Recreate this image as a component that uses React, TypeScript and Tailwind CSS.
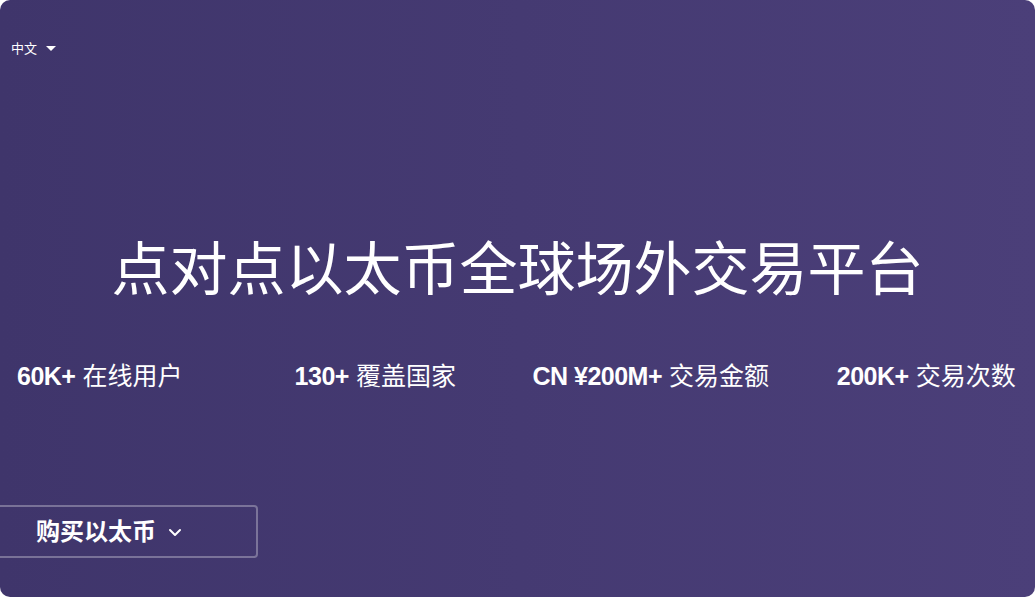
import React from "react";

const font = { fontFamily: '"Liberation Sans", "Noto Sans CJK SC", sans-serif' };

function Stat({ num, label }: { num: string; label: string }) {
  return (
    <div className="flex justify-center items-baseline whitespace-nowrap text-white text-[25px] leading-none">
      <span className="font-bold tracking-[-0.5px]">{num}</span>
      <span className="ml-[7px] font-normal">{label}</span>
    </div>
  );
}

export default function App() {
  return (
    <div className="w-[1035px] h-[597px] bg-white overflow-hidden" style={font}>
      <div className="relative w-full h-full rounded-[10px] overflow-hidden bg-gradient-to-r from-[#3f356b] to-[#4b3f79] flex flex-col">
        <div className="pt-[42px] pl-[11px] flex items-center text-white text-[13px] leading-none">
          <span>中文</span>
          <svg className="ml-[9px]" width="10" height="5" viewBox="0 0 10 5">
            <path d="M0 0 L10 0 L5 5 Z" fill="white" />
          </svg>
        </div>
        <h1 className="mt-[186px] text-center text-white text-[58px] leading-none font-normal tracking-[0px]">
          点对点以太币全球场外交易平台
        </h1>
        <div className="mt-[65px] -ml-[38px] w-[1102px] grid grid-cols-4">
          <Stat num="60K+" label="在线用户" />
          <Stat num="130+" label="覆盖国家" />
          <Stat num="CN ¥200M+" label="交易金额" />
          <Stat num="200K+" label="交易次数" />
        </div>
        <div className="mt-[116px] -ml-[12px] w-[270px] h-[53px] border-2 border-white/30 rounded-[4px] flex items-center pl-[46px] text-white">
          <span className="text-[24px] font-bold leading-none">购买以太币</span>
          <svg className="ml-[12px] mt-[1px]" width="14" height="9" viewBox="0 0 14 9">
            <path d="M2 2 L7 7 L12 2" stroke="white" strokeWidth="2" fill="none" strokeLinecap="round" strokeLinejoin="round" />
          </svg>
        </div>
      </div>
    </div>
  );
}
